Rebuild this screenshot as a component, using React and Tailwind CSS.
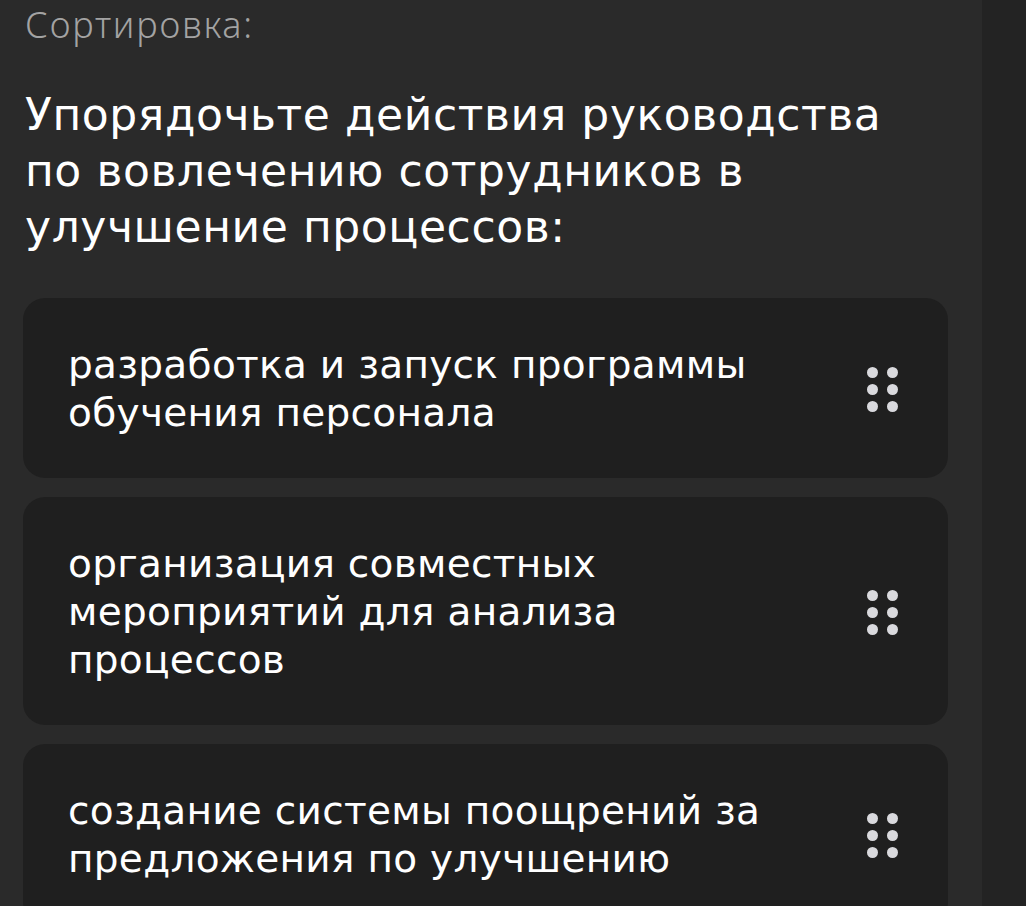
import React from "react";

const items = [
  "разработка и запуск программы обучения персонала",
  "организация совместных мероприятий для анализа процессов",
  "создание системы поощрений за предложения по улучшению",
];

function DragHandle() {
  return (
    <div className="grid grid-cols-2 gap-x-[9px] gap-y-[6px] shrink-0">
      {[0, 1, 2, 3, 4, 5].map((i) => (
        <span key={i} className="block w-[11px] h-[11px] rounded-full bg-[#d9d9dd]" />
      ))}
    </div>
  );
}

export default function App() {
  return (
    <div
      className="flex h-[906px] w-[1026px] overflow-hidden bg-[#232323]"
      style={{ fontFamily: '"DejaVu Sans", "Noto Sans", sans-serif' }}
    >
      <div className="w-[982px] shrink-0 bg-[#2a2a2a] pl-[23px] pr-[34px]">
        <div
          className="pl-[2px] pt-[2px] text-[36px] leading-[46px] font-light tracking-[1.8px] text-[#a3a3a3]"
          style={{ fontFamily: '"Noto Sans", sans-serif' }}
        >
          Сортировка:
        </div>
        <h1 className="mt-[39px] pl-[2px] pr-[20px] text-[44px] leading-[56px] font-normal tracking-[0.6px] text-white">
          Упорядочьте действия руководства по вовлечению сотрудников в улучшение процессов:
        </h1>
        <div className="mt-[43px] flex flex-col gap-[19px]">
          {items.map((t) => (
            <div
              key={t}
              className="flex items-center rounded-[22px] bg-[#1f1f1f] pt-[43px] pb-[41px] pl-[45px] pr-[50px]"
            >
              <p className="flex-1 pr-[40px] text-[39px] leading-[48px] tracking-[0.3px] text-white">{t}</p>
              <DragHandle />
            </div>
          ))}
        </div>
      </div>
    </div>
  );
}
